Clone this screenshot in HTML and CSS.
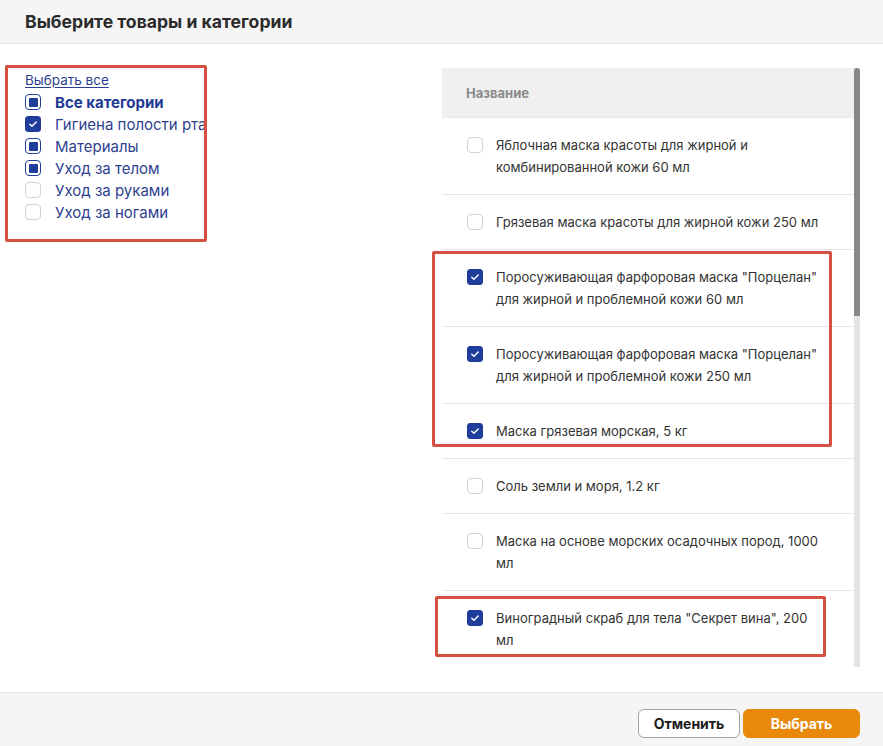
FILE: index.html
```html
<!DOCTYPE html>
<html lang="ru">
<head>
<meta charset="utf-8">
<title>Выберите товары и категории</title>
<link rel="stylesheet" href="styles.css">
</head>
<body>
<div class="dialog">
  <header class="dialog-header">
    <h1 class="dialog-title">Выберите товары и категории</h1>
  </header>

  <main class="dialog-body">
    <section class="categories">
      <a class="select-all" href="#">Выбрать все</a>
      <ul class="cat-list">
        <li class="cat-item cat-all"><span class="cb cb-partial"></span><span class="cat-label">Все категории</span></li>
        <li class="cat-item"><span class="cb cb-checked"><svg viewBox="0 0 16 16"><path d="M4.3 8.2l2.5 2.4 4.9-5" /></svg></span><span class="cat-label">Гигиена полости рта</span></li>
        <li class="cat-item"><span class="cb cb-partial"></span><span class="cat-label">Материалы</span></li>
        <li class="cat-item"><span class="cb cb-partial"></span><span class="cat-label">Уход за телом</span></li>
        <li class="cat-item"><span class="cb"></span><span class="cat-label">Уход за руками</span></li>
        <li class="cat-item"><span class="cb"></span><span class="cat-label">Уход за ногами</span></li>
      </ul>
    </section>

    <section class="products">
      <div class="table-scroll">
        <div class="table-head">Название</div>
        <div class="row"><span class="cb"></span><span class="row-text">Яблочная маска красоты для жирной и комбинированной кожи 60 мл</span></div>
        <div class="row"><span class="cb"></span><span class="row-text">Грязевая маска красоты для жирной кожи 250 мл</span></div>
        <div class="row"><span class="cb cb-checked"><svg viewBox="0 0 16 16"><path d="M4.3 8.2l2.5 2.4 4.9-5" /></svg></span><span class="row-text">Поросуживающая фарфоровая маска "Порцелан" для жирной и проблемной кожи 60 мл</span></div>
        <div class="row"><span class="cb cb-checked"><svg viewBox="0 0 16 16"><path d="M4.3 8.2l2.5 2.4 4.9-5" /></svg></span><span class="row-text">Поросуживающая фарфоровая маска "Порцелан" для жирной и проблемной кожи 250 мл</span></div>
        <div class="row"><span class="cb cb-checked"><svg viewBox="0 0 16 16"><path d="M4.3 8.2l2.5 2.4 4.9-5" /></svg></span><span class="row-text">Маска грязевая морская, 5 кг</span></div>
        <div class="row"><span class="cb"></span><span class="row-text">Соль земли и моря, 1.2 кг</span></div>
        <div class="row"><span class="cb"></span><span class="row-text">Маска на основе морских осадочных пород, 1000 мл</span></div>
        <div class="row"><span class="cb cb-checked"><svg viewBox="0 0 16 16"><path d="M4.3 8.2l2.5 2.4 4.9-5" /></svg></span><span class="row-text">Виноградный скраб для тела "Секрет вина", 200 мл</span></div>
      </div>
      <div class="scrollbar"><div class="thumb"></div></div>
    </section>
  </main>

  <footer class="dialog-footer">
    <button class="btn btn-cancel" type="button">Отменить</button>
    <button class="btn btn-primary" type="button">Выбрать</button>
  </footer>

  <div class="mark mark-cats"></div>
  <div class="mark mark-rows"></div>
  <div class="mark mark-last"></div>
</div>
</body>
</html>
```

FILE: styles.css
```css
html, body {
  margin: 0;
  padding: 0;
  height: 100%;
  overflow: hidden;
  background: #fff;
}

body {
  font-family: Inter, "Noto Sans", "Liberation Sans", sans-serif;
  color: #333;
}

.dialog {
  position: relative;
  height: 746px;
  display: flex;
  flex-direction: column;
}

.dialog-header {
  height: 43px;
  background: #f5f5f5;
  border-bottom: 1px solid #e3e3e3;
  display: flex;
  align-items: center;
  padding-left: 25px;
  flex-shrink: 0;
}

.dialog-title {
  margin: 0;
  font-size: 17.6px;
  font-weight: 700;
  color: #2b2b2b;
}

.dialog-body {
  display: flex;
  height: 648px;
  box-sizing: border-box;
  padding: 24px 23px 0 25px;
  flex-shrink: 0;
}

.categories {
  width: 417px;
  padding-top: 1px;
}

.select-all {
  display: block;
  font-size: 13.5px;
  line-height: 22px;
  color: #2c3f8f;
  text-decoration: underline;
  text-underline-offset: 2px;
}

.cat-list {
  list-style: none;
  margin: 0;
  padding: 0;
}

.cat-item {
  display: flex;
  align-items: center;
  height: 22px;
  gap: 14px;
}

.cat-label {
  font-size: 15px;
  color: #2f3f8f;
  white-space: nowrap;
}

.cat-all .cat-label {
  font-weight: 700;
  color: #1e3a94;
}

/* checkboxes */
.cb {
  width: 16px;
  height: 16px;
  box-sizing: border-box;
  border: 1px solid #d3d3d3;
  border-radius: 4px;
  background: #fff;
  flex-shrink: 0;
  display: flex;
  align-items: center;
  justify-content: center;
}

.cb svg {
  width: 16px;
  height: 16px;
  display: block;
}

.cb svg path {
  fill: none;
  stroke: #fff;
  stroke-width: 1.6;
  stroke-linecap: round;
  stroke-linejoin: round;
}

.cb-checked {
  background: #1f3d9b;
  border-color: #1f3d9b;
  border-radius: 3px;
}

.cb-partial {
  border: 1.5px solid #1f3d9b;
}

.cb-partial::after {
  content: "";
  width: 9px;
  height: 9px;
  background: #1f3d9b;
  border-radius: 1px;
}

/* product table */
.products {
  display: flex;
  width: 418px;
  height: 599px;
}

.table-scroll {
  width: 412px;
  height: 599px;
  overflow: hidden;
}

.table-head {
  height: 49px;
  background: #f0f0f0;
  border-bottom: 1px solid #e6e6e6;
  display: flex;
  align-items: center;
  padding-left: 24px;
  font-size: 13px;
  font-weight: 700;
  color: #8a8a8a;
}

.row {
  display: flex;
  align-items: flex-start;
  gap: 13px;
  padding: 16px 31px 16px 25px;
  border-bottom: 1px solid #e6e6e6;
}

.row .cb {
  margin-top: 3px;
}

.row-text {
  flex: 1;
  font-size: 13px;
  line-height: 22px;
  color: #333;
}

.scrollbar {
  width: 6px;
  height: 599px;
  background: #e4e4e4;
}

.thumb {
  height: 248px;
  background: #878787;
  border-radius: 3px 3px 0 0;
}

/* footer */
.dialog-footer {
  flex: 1;
  background: #f5f5f5;
  border-top: 1px solid #e3e3e3;
  display: flex;
  justify-content: flex-end;
  align-items: flex-start;
  gap: 3px;
  padding: 16px 23px 0 0;
}

.btn {
  height: 29px;
  border-radius: 6px;
  font-family: inherit;
  font-size: 14px;
  font-weight: 700;
  cursor: pointer;
}

.btn-cancel {
  width: 102px;
  background: #fff;
  border: 1px solid #a3a3a3;
  color: #1a1a1a;
}

.btn-primary {
  width: 117px;
  background: #e8890c;
  border: 1px solid #e8890c;
  color: #fff;
}

/* red annotation frames drawn over the content */
.mark {
  position: absolute;
  border: 3px solid #d4503f;
  border-radius: 2px;
  pointer-events: none;
}

.mark-cats {
  left: 5px;
  top: 65px;
  width: 196px;
  height: 171px;
}

.mark-rows {
  left: 432px;
  top: 251px;
  width: 394px;
  height: 190px;
}

.mark-last {
  left: 435px;
  top: 596px;
  width: 385px;
  height: 55px;
}
```
